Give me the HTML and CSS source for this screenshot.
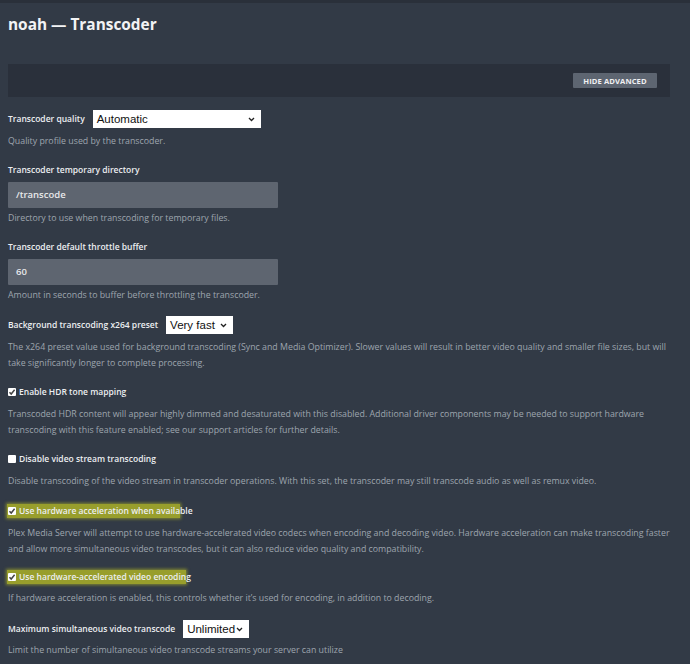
FILE: index.html
```html
<!DOCTYPE html>
<html lang="en">
<head>
<meta charset="utf-8">
<title>noah — Transcoder</title>
<link rel="stylesheet" href="styles.css">
</head>
<body>
<div class="topstrip"></div>
<main class="page">
  <h1 class="title">noah — Transcoder</h1>
  <div class="advbar"><button class="advbtn">HIDE ADVANCED</button></div>

  <section class="setting s-select">
    <div class="row"><span class="label">Transcoder quality</span>
      <div class="select w-quality"><span class="sel-text">Automatic</span><svg class="chev" viewBox="0 0 8 6" width="7" height="5"><path d="M1 1.2 L4 4.2 L7 1.2" fill="none" stroke="#222" stroke-width="1.6"/></svg></div>
    </div>
    <p class="desc">Quality profile used by the transcoder.</p>
  </section>

  <section class="setting s-input">
    <div class="label">Transcoder temporary directory</div>
    <div class="input">/transcode</div>
    <p class="desc">Directory to use when transcoding for temporary files.</p>
  </section>

  <section class="setting s-input">
    <div class="label">Transcoder default throttle buffer</div>
    <div class="input">60</div>
    <p class="desc">Amount in seconds to buffer before throttling the transcoder.</p>
  </section>

  <section class="setting s-select">
    <div class="row"><span class="label">Background transcoding x264 preset</span>
      <div class="select w-preset"><span class="sel-text">Very fast</span><svg class="chev" viewBox="0 0 8 6" width="7" height="5"><path d="M1 1.2 L4 4.2 L7 1.2" fill="none" stroke="#222" stroke-width="1.6"/></svg></div>
    </div>
    <p class="desc">The x264 preset value used for background transcoding (Sync and Media Optimizer). Slower values will result in better video quality and smaller file sizes, but will take significantly longer to complete processing.</p>
  </section>

  <section class="setting s-check">
    <div class="check"><span class="box"><svg viewBox="0 0 8 8" width="8" height="8"><path d="M1.5 4.2 L3.2 6 L6.6 1.8" fill="none" stroke="#444" stroke-width="1.5"/></svg></span><span class="label">Enable HDR tone mapping</span></div>
    <p class="desc">Transcoded HDR content will appear highly dimmed and desaturated with this disabled. Additional driver components may be needed to support hardware transcoding with this feature enabled; see our support articles for further details.</p>
  </section>

  <section class="setting s-check">
    <div class="check"><span class="box"></span><span class="label">Disable video stream transcoding</span></div>
    <p class="desc">Disable transcoding of the video stream in transcoder operations. With this set, the transcoder may still transcode audio as well as remux video.</p>
  </section>

  <section class="setting s-check s-hw">
    <div class="check"><span class="hl"><span class="box"><svg viewBox="0 0 8 8" width="8" height="8"><path d="M1.5 4.2 L3.2 6 L6.6 1.8" fill="none" stroke="#444" stroke-width="1.5"/></svg></span><span class="label">Use hardware acceleration when availa</span></span><span class="label">ble</span></div>
    <p class="desc">Plex Media Server will attempt to use hardware-accelerated video codecs when encoding and decoding video. Hardware acceleration can make transcoding faster and allow more simultaneous video transcodes, but it can also reduce video quality and compatibility.</p>
  </section>

  <section class="setting s-check s-enc">
    <div class="check"><span class="hl"><span class="box"><svg viewBox="0 0 8 8" width="8" height="8"><path d="M1.5 4.2 L3.2 6 L6.6 1.8" fill="none" stroke="#444" stroke-width="1.5"/></svg></span><span class="label">Use hardware-accelerated video encodin</span></span><span class="label">g</span></div>
    <p class="desc">If hardware acceleration is enabled, this controls whether it’s used for encoding, in addition to decoding.</p>
  </section>

  <section class="setting s-select s-max">
    <div class="row"><span class="label">Maximum simultaneous video transcode</span>
      <div class="select w-max"><span class="sel-text">Unlimited</span><svg class="chev" viewBox="0 0 8 6" width="7" height="5"><path d="M1 1.2 L4 4.2 L7 1.2" fill="none" stroke="#222" stroke-width="1.6"/></svg></div>
    </div>
    <p class="desc">Limit the number of simultaneous video transcode streams your server can utilize</p>
  </section>
</main>
</body>
</html>
```

FILE: styles.css
```css
* { box-sizing: border-box; }
html, body { margin: 0; padding: 0; }
body {
  background: #323a46;
  font-family: "Open Sans", "Noto Sans", sans-serif;
  color: #e6e8eb;
  width: 690px;
  height: 664px;
  overflow: hidden;
}
.topstrip { height: 3px; background: #2a303a; }
.page { padding: 0 20px 0 8px; }
.title {
  margin: 0;
  padding-top: 12px;
  font-size: 15.4px;
  line-height: 20px;
  font-weight: 700;
  color: #f2f3f5;
}
.advbar {
  margin-top: 29px;
  height: 33px;
  background: #2a303b;
  display: flex;
  align-items: center;
  justify-content: flex-end;
  padding-right: 13px;
}
.advbtn {
  border: 0;
  margin: 0;
  height: 15px;
  width: 84px;
  padding: 0;
  background: #5d6571;
  color: #f0f1f3;
  font-family: "Open Sans", sans-serif;
  font-weight: 700;
  font-size: 7.6px;
  letter-spacing: 0.1px;
  border-radius: 1px;
}
.setting { margin: 0; }
.label {
  font-size: 8.5px;
  font-weight: 600;
  line-height: 14px;
  color: #eceef1;
}
.desc {
  margin: 0;
  font-size: 8.8px;
  line-height: 16px;
  color: #9ea5ae;
}
.row { display: flex; align-items: center; gap: 8px; height: 18px; }
.select {
  height: 18px;
  background: #fff;
  display: flex;
  align-items: center;
  justify-content: space-between;
  padding: 0 6px 0 4px;
  color: #111;
  font-family: "Liberation Sans", Arial, sans-serif;
  font-size: 11.5px;
}
.chev { display: block; }
.w-quality { width: 168px; }
.w-preset { width: 67px; }
.w-max { width: 66px; }
.input {
  width: 270px;
  height: 26px;
  background: #5e6570;
  color: #e8e9eb;
  font-size: 9.5px;
  font-weight: 600;
  line-height: 26px;
  padding-left: 8px;
  border-radius: 1px;
}
.check { display: flex; align-items: center; height: 14px; }
.box {
  width: 8px; height: 8px;
  background: #fff;
  margin-right: 3px;
  border-radius: 1px;
  display: inline-flex;
}
.box svg { display: block; }
.hl {
  display: inline-flex;
  align-items: center;
  background: rgba(210, 215, 30, 0.64);
  box-shadow: 0 0 3px 1px rgba(210, 215, 30, 0.5);
  margin-left: -1px;
  padding-left: 1px;
}

/* vertical rhythm */
.s-select:nth-of-type(1) { margin-top: 13px; }
.s-select .desc { margin-top: 5px; }
.s-input .input { margin-top: 5px; }
.s-input .desc { margin-top: 2px; }
.setting + .setting { margin-top: 14px; }
.s-input + .s-select { margin-top: 13px; }
.s-check .desc { margin-top: 7px; }
.s-select + .s-check { margin-top: 14px; }
.s-check + .s-check { margin-top: 14px; }
.s-check + .s-hw { margin-top: 15px; }
.s-hw + .s-enc { margin-top: 13px; }
.s-enc .desc { margin-top: 6px; }
.s-check + .s-select { margin-top: 14px; }
.s-max .desc { margin-top: 4px; }
```
